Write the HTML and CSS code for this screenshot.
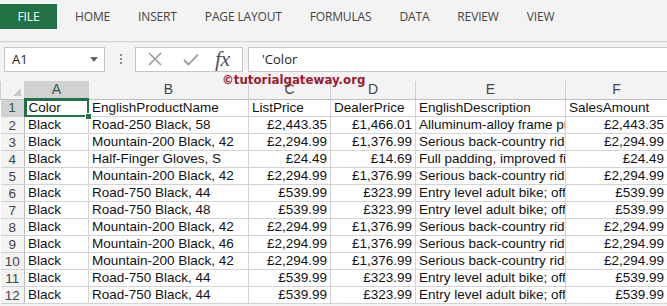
FILE: index.html
```html
<!DOCTYPE html>
<html lang="en">
<head>
    <meta charset="UTF-8">
    <title>Book1 - Excel</title>
    <link rel="stylesheet" href="styles.css">
</head>
<body>
    <div class="ribbon">
        <div class="tab file">FILE</div>
        <div class="tab">HOME</div>
        <div class="tab">INSERT</div>
        <div class="tab">PAGE LAYOUT</div>
        <div class="tab">FORMULAS</div>
        <div class="tab">DATA</div>
        <div class="tab">REVIEW</div>
        <div class="tab">VIEW</div>
    </div>
    <div class="ribbon-edge"></div>

    <div class="formula-bar">
        <div class="name-box">
            <span>A1</span>
            <svg width="8" height="5" viewBox="0 0 8 5"><path d="M0 0h8L4 5z" fill="#666"/></svg>
        </div>
        <div class="grip">
            <span></span><span></span><span></span>
        </div>
        <div class="fx-box">
            <svg width="14" height="14" viewBox="0 0 14 14"><path d="M1 1l12 12M13 1L1 13" stroke="#9a9a9a" stroke-width="1.6" fill="none"/></svg>
            <svg width="16" height="13" viewBox="0 0 16 13"><path d="M1 7l4.5 4.5L15 1.5" stroke="#9a9a9a" stroke-width="1.8" fill="none"/></svg>
            <span class="fx">fx</span>
        </div>
        <div class="formula-input">'Color</div>
    </div>

    <div class="sheet">
        <div class="watermark">©tutorialgateway.org</div>
        <table class="grid">
            <colgroup>
                <col class="c-row"><col class="c-a"><col class="c-b"><col class="c-c">
                <col class="c-d"><col class="c-e"><col class="c-f">
            </colgroup>
            <thead>
                <tr>
                    <th class="corner"><span class="corner-mark"></span></th>
                    <th class="active">A</th><th>B</th><th>C</th><th>D</th><th>E</th><th>F</th>
                </tr>
            </thead>
            <tbody>
                <tr>
                    <th class="active">1</th>
                    <td class="selected">Color<span class="handle"></span></td>
                    <td>EnglishProductName</td><td>ListPrice</td><td>DealerPrice</td>
                    <td>EnglishDescription</td><td>SalesAmount</td>
                </tr>
                <tr><th>2</th><td>Black</td><td>Road-250 Black, 58</td><td class="num">£2,443.35</td><td class="num">£1,466.01</td><td>Alluminum-alloy frame pr</td><td class="num">£2,443.35</td></tr>
                <tr><th>3</th><td>Black</td><td>Mountain-200 Black, 42</td><td class="num">£2,294.99</td><td class="num">£1,376.99</td><td>Serious back-country ridi</td><td class="num">£2,294.99</td></tr>
                <tr><th>4</th><td>Black</td><td>Half-Finger Gloves, S</td><td class="num">£24.49</td><td class="num">£14.69</td><td>Full padding, improved fi</td><td class="num">£24.49</td></tr>
                <tr><th>5</th><td>Black</td><td>Mountain-200 Black, 42</td><td class="num">£2,294.99</td><td class="num">£1,376.99</td><td>Serious back-country ridi</td><td class="num">£2,294.99</td></tr>
                <tr><th>6</th><td>Black</td><td>Road-750 Black, 44</td><td class="num">£539.99</td><td class="num">£323.99</td><td>Entry level adult bike; offe</td><td class="num">£539.99</td></tr>
                <tr><th>7</th><td>Black</td><td>Road-750 Black, 48</td><td class="num">£539.99</td><td class="num">£323.99</td><td>Entry level adult bike; offe</td><td class="num">£539.99</td></tr>
                <tr><th>8</th><td>Black</td><td>Mountain-200 Black, 42</td><td class="num">£2,294.99</td><td class="num">£1,376.99</td><td>Serious back-country ridi</td><td class="num">£2,294.99</td></tr>
                <tr><th>9</th><td>Black</td><td>Mountain-200 Black, 46</td><td class="num">£2,294.99</td><td class="num">£1,376.99</td><td>Serious back-country ridi</td><td class="num">£2,294.99</td></tr>
                <tr><th>10</th><td>Black</td><td>Mountain-200 Black, 42</td><td class="num">£2,294.99</td><td class="num">£1,376.99</td><td>Serious back-country ridi</td><td class="num">£2,294.99</td></tr>
                <tr><th>11</th><td>Black</td><td>Road-750 Black, 44</td><td class="num">£539.99</td><td class="num">£323.99</td><td>Entry level adult bike; offe</td><td class="num">£539.99</td></tr>
                <tr><th>12</th><td>Black</td><td>Road-750 Black, 44</td><td class="num">£539.99</td><td class="num">£323.99</td><td>Entry level adult bike; offe</td><td class="num">£539.99</td></tr>
            </tbody>
        </table>
    </div>
</body>
</html>
```

FILE: styles.css
```css
body {
    margin: 0;
    padding: 0;
    width: 667px;
    height: 306px;
    overflow: hidden;
    background-color: #f3f3f3;
    font-family: "Open Sans", "Liberation Sans", sans-serif;
}

.ribbon {
    display: flex;
    align-items: center;
    height: 25px;
    padding-top: 4px;
    background-color: #f3f3f3;
}

.tab {
    font-size: 12px;
    color: #444;
    padding: 0 14px;
    line-height: 25px;
    letter-spacing: -0.15px;
}

.tab.file {
    width: 57px;
    box-sizing: border-box;
    padding: 0;
    margin-right: 4px;
    text-align: center;
    background-color: #217346;
    color: white;
}

.ribbon-edge {
    height: 12px;
    border-bottom: 1px solid #d4d4d4;
    box-shadow: 0 1px 0 #ececec;
}

.formula-bar {
    display: flex;
    align-items: center;
    height: 26px;
    padding: 4px 0 9px 4px;
}

.name-box {
    display: flex;
    align-items: center;
    justify-content: space-between;
    width: 101px;
    height: 25px;
    box-sizing: border-box;
    padding: 0 6px 0 7px;
    background-color: white;
    border: 1px solid #c6c6c6;
    font-size: 13px;
    color: #222;
}

.grip {
    display: flex;
    flex-direction: column;
    gap: 2px;
    margin: 0 13px 0 15px;
}

.grip span {
    width: 2px;
    height: 2px;
    background-color: #8a8a8a;
}

.fx-box {
    display: flex;
    align-items: center;
    width: 108px;
    height: 25px;
    box-sizing: border-box;
    padding: 0 0 0 12px;
    background-color: white;
    border: 1px solid #c6c6c6;
}

.fx-box svg:nth-child(2) {
    margin-left: 21px;
}

.fx {
    margin-left: 16px;
    font-family: "Liberation Serif", serif;
    font-style: italic;
    font-size: 22px;
    line-height: 22px;
    color: #555;
    letter-spacing: -0.5px;
}

.formula-input {
    flex: 1;
    height: 25px;
    box-sizing: border-box;
    margin-left: 5px;
    padding-left: 13px;
    line-height: 23px;
    background-color: white;
    border-top: 1px solid #c6c6c6;
    border-bottom: 1px solid #c6c6c6;
    border-left: 1px solid #c6c6c6;
    font-size: 13px;
    color: #222;
}

.sheet {
    position: relative;
    background-color: white;
}

.watermark {
    position: absolute;
    left: 222px;
    top: -8px;
    font-family: "DejaVu Sans", sans-serif;
    font-weight: bold;
    font-size: 11.8px;
    color: #9b1b30;
    z-index: 2;
}

.grid {
    table-layout: fixed;
    border-collapse: collapse;
    width: 667px;
    font-family: "Liberation Sans", Arial, sans-serif;
    font-size: 13.5px;
    color: #111;
}

.c-row { width: 24px; }
.c-a { width: 64px; }
.c-b { width: 160px; }
.c-c { width: 82px; }
.c-d { width: 85px; }
.c-e { width: 150px; }
.c-f { width: 102px; }

.grid th {
    height: 16px;
    padding: 0;
    font-weight: normal;
    color: #444;
    background-color: #f3f3f3;
    border: 1px solid #d0d0d0;
    overflow: hidden;
}

.grid thead th {
    height: 17px;
    font-size: 14px;
    line-height: 17px;
    border-top: none;
    border-bottom: 1px solid #bdbdbd;
}

.grid tbody th {
    border-left: none;
    border-right: 1px solid #bdbdbd;
    font-size: 13.5px;
}

.grid th.active {
    background-color: #d2d2d2;
    color: #2e5e44;
}

.grid thead th.active {
    border-bottom: 2px solid #217346;
}

.grid tbody th.active {
    border-right: 2px solid #217346;
}

.corner {
    position: relative;
}

.corner-mark {
    position: absolute;
    right: 3px;
    bottom: 3px;
    width: 0;
    height: 0;
    border-left: 8px solid transparent;
    border-bottom: 8px solid #c8c8c8;
}

.grid td {
    height: 16px;
    padding: 0 3px;
    line-height: 16px;
    border: 1px solid #d4d4d4;
    white-space: nowrap;
    overflow: hidden;
}

.grid td.num {
    text-align: right;
}

.grid td.selected {
    position: relative;
    overflow: visible;
    outline: 2px solid #217346;
    outline-offset: -2px;
}

.handle {
    position: absolute;
    right: -4px;
    bottom: -4px;
    width: 5px;
    height: 5px;
    background-color: #217346;
    border: 1px solid white;
    z-index: 3;
}
```
